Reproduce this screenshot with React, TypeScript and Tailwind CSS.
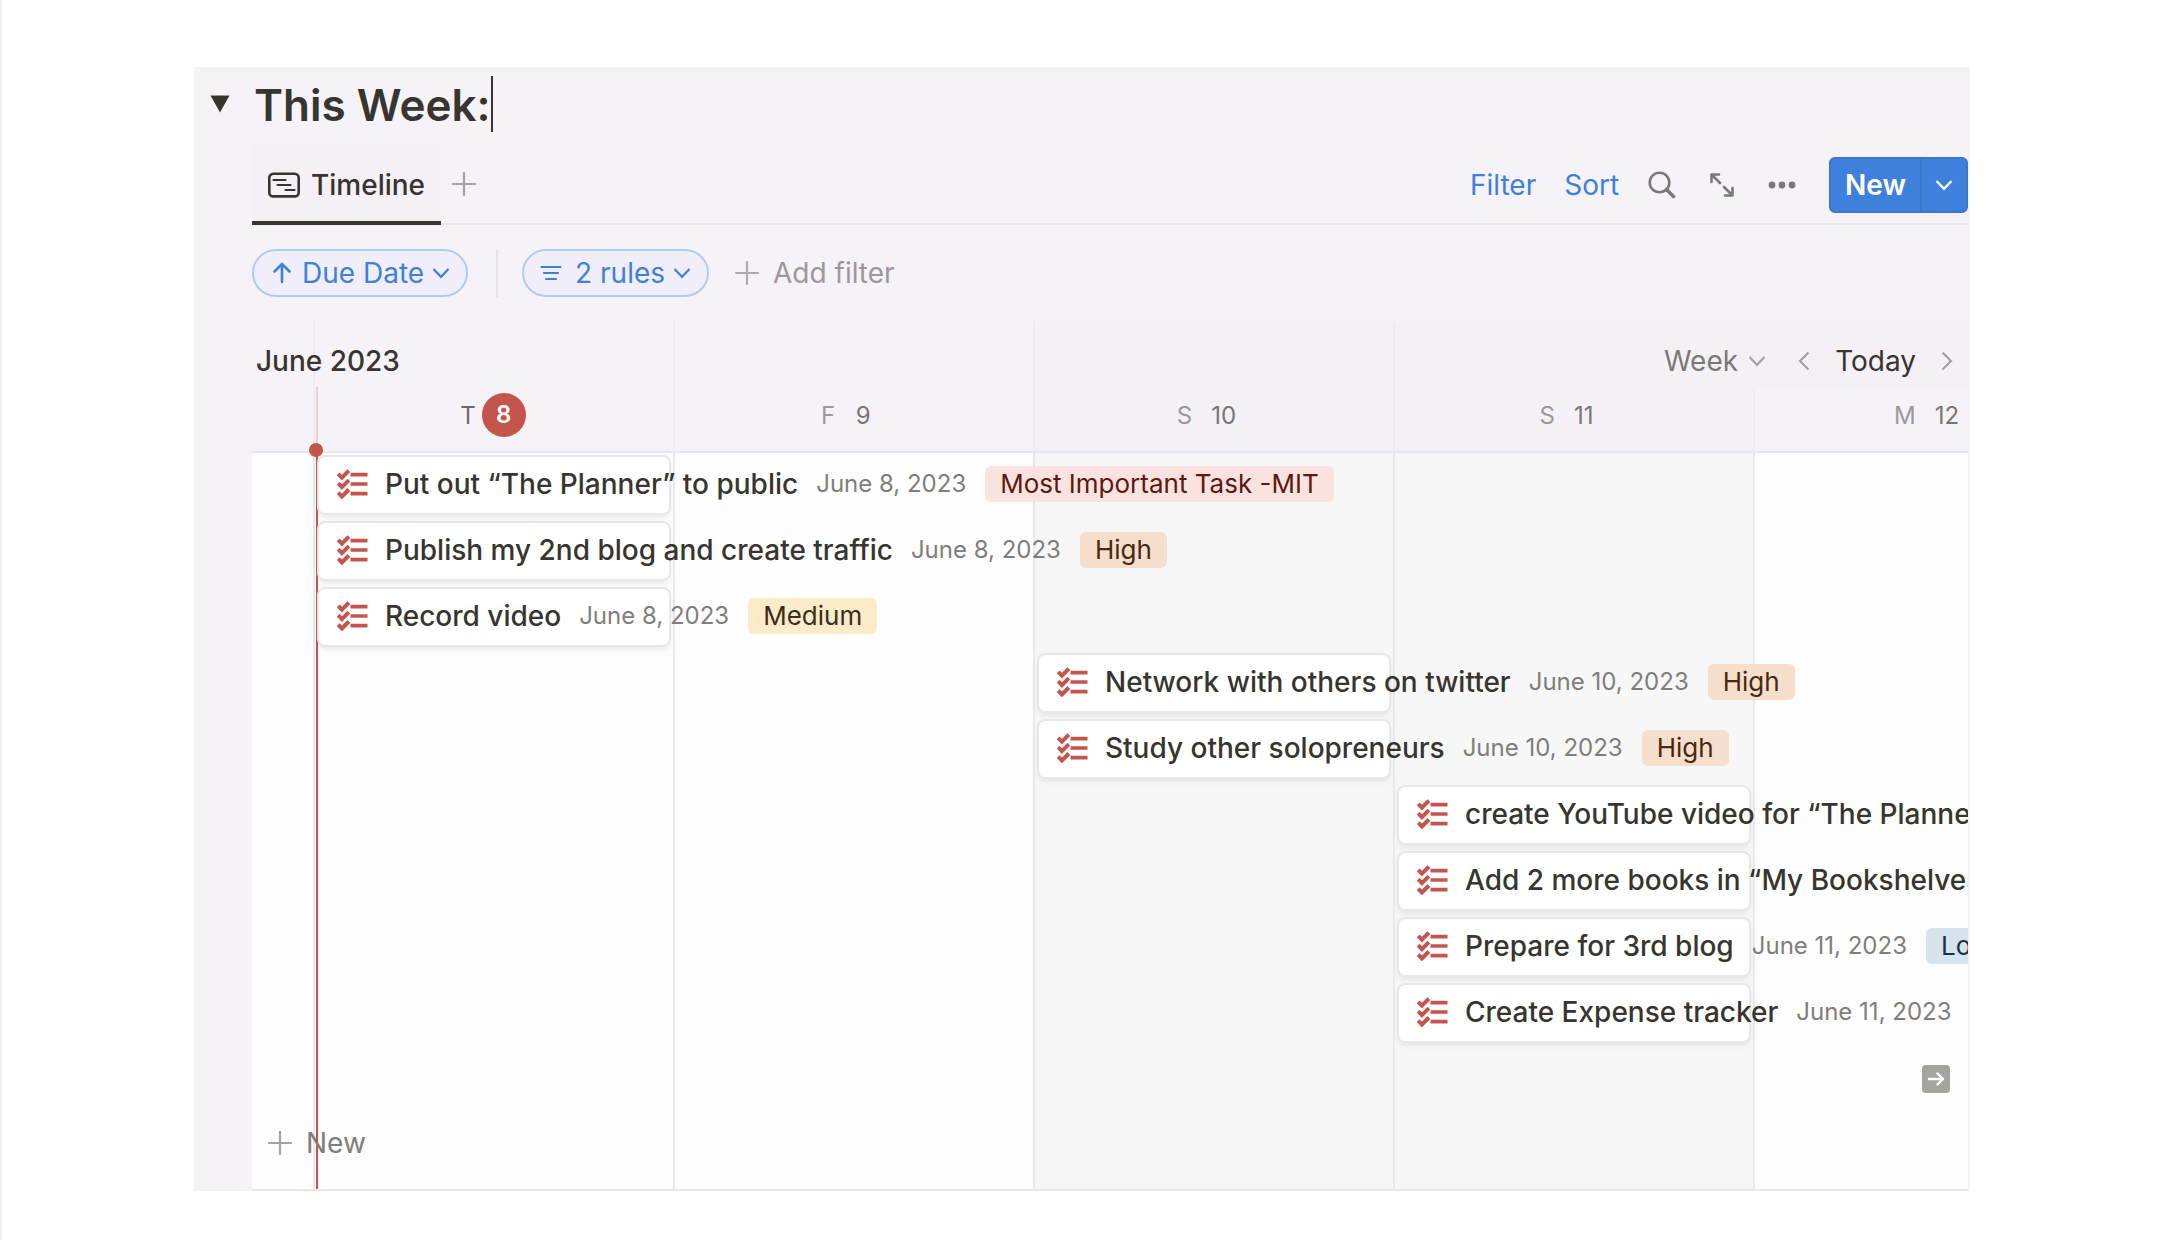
import { ReactNode } from "react";
import clsx from "clsx";

interface Day {
    letter: string;
    date: number;
    isToday?: boolean;
    isWeekend?: boolean;
}

interface Task {
    name: string;
    date: string;
    priority?: string;
    start: string;
}

const DAYS: Day[] = [
    { letter: "T", date: 8, isToday: true },
    { letter: "F", date: 9 },
    { letter: "S", date: 10, isWeekend: true },
    { letter: "S", date: 11, isWeekend: true },
    { letter: "M", date: 12 },
];

const TASKS: Task[] = [
    { name: "Put out “The Planner” to public", date: "June 8, 2023", priority: "Most Important Task -MIT", start: "col-start-2" },
    { name: "Publish my 2nd blog and create traffic", date: "June 8, 2023", priority: "High", start: "col-start-2" },
    { name: "Record video", date: "June 8, 2023", priority: "Medium", start: "col-start-2" },
    { name: "Network with others on twitter", date: "June 10, 2023", priority: "High", start: "col-start-4" },
    { name: "Study other solopreneurs", date: "June 10, 2023", priority: "High", start: "col-start-4" },
    { name: "create YouTube video for “The Planner”", date: "June 11, 2023", priority: "High", start: "col-start-5" },
    { name: "Add 2 more books in “My Bookshelves”", date: "June 11, 2023", priority: "Medium", start: "col-start-5" },
    { name: "Prepare for 3rd blog", date: "June 11, 2023", priority: "Low", start: "col-start-5" },
    { name: "Create Expense tracker", date: "June 11, 2023", start: "col-start-5" },
];

const TAG_COLORS: Record<string, string> = {
    "Most Important Task -MIT": "bg-[#fae3de] text-[#5d1715]",
    High: "bg-[#f6decc] text-[#49290e]",
    Medium: "bg-[#faebc9] text-[#402c1b]",
    Low: "bg-[#d6e4ee] text-[#183347]",
};

const GRID = "grid grid-cols-[61px_repeat(5,360px)]";

function ChevronDown({ className }: { className?: string }) {
    return (
        <svg viewBox="0 0 18 12" fill="none" stroke="currentColor" strokeWidth="2.2" className={clsx("h-3 w-[18px]", className)}>
            <path d="M1.5 2 9 9.8 16.5 2" />
        </svg>
    );
}

function Chevron({ flip }: { flip?: boolean }) {
    return (
        <svg viewBox="0 0 12 20" fill="none" stroke="currentColor" strokeWidth="2.2" className={clsx("h-5 w-3", flip && "rotate-180")}>
            <path d="M10.5 1.5 2 10l8.5 8.5" />
        </svg>
    );
}

function Plus() {
    return (
        <svg viewBox="0 0 24 24" stroke="currentColor" strokeWidth="2.2" strokeLinecap="round" className="size-6">
            <path d="M12 1v22M1 12h22" />
        </svg>
    );
}

function ChecklistIcon() {
    return (
        <svg viewBox="0 0 31 30" fill="none" stroke="#c4554d" className="h-[30px] w-[31px] shrink-0">
            <path strokeWidth="4" d="M1.2 4.8l3.7 3.9 7-7M1.2 14.2l3.7 3.9 7-7M1.2 23.6l3.7 3.9 7-7" />
            <path strokeWidth="3.6" d="M13.5 5.6h17M13.5 15h17M13.5 24.6h17" />
        </svg>
    );
}

function Pill({ children }: { children: ReactNode }) {
    return (
        <button className="flex h-12 items-center rounded-full border-2 border-[#b2caef] bg-[#f0eef8] px-3 text-[#3f80dc]">
            {children}
        </button>
    );
}

function Toolbar() {
    return (
        <div className="mt-[13px] flex h-20 items-center justify-between border-b-2 border-[#e9e7ea]">
            <div className="flex items-center">
                <button className="-mb-[2px] flex h-20 items-center gap-[11px] border-b-4 border-[#37352f] bg-[#f5f0f5] px-4 pt-1 font-medium">
                    <svg viewBox="0 0 32 26" fill="none" stroke="currentColor" strokeWidth="2.6" strokeLinecap="round" className="h-[26px] w-8">
                        <rect x="1.3" y="1.8" width="29.4" height="22.6" rx="4" />
                        <path strokeWidth="2.2" d="M5.5 8h12M9.5 13h13M17.5 18h9" />
                    </svg>
                    Timeline
                </button>
                <button aria-label="Add view" className="ml-[11px] text-[#a3a1a3]">
                    <Plus />
                </button>
            </div>
            <div className="flex items-center pt-[2px]">
                <button className="text-[#3f80dc]">Filter</button>
                <button className="ml-7 text-[#3f80dc]">Sort</button>
                <button aria-label="Search" className="ml-[29px] text-[#7b7977]">
                    <svg viewBox="0 0 28 28" fill="none" stroke="currentColor" className="size-7">
                        <circle cx="11.5" cy="11.5" r="9.8" strokeWidth="2.6" />
                        <path d="M18.5 18.5l7 7" strokeWidth="3.6" strokeLinecap="round" />
                    </svg>
                </button>
                <button aria-label="Expand" className="ml-[33px] text-[#7b7977]">
                    <svg viewBox="0 0 26 26" fill="none" stroke="currentColor" strokeWidth="2.6" strokeLinecap="round" strokeLinejoin="round" className="size-[26px]">
                        <path d="M2.5 10V2.5H10M3 3l8 8M23.5 16v7.5H16M23 23l-8-8" />
                    </svg>
                </button>
                <button aria-label="More" className="ml-[33px] text-[#7b7977]">
                    <svg viewBox="0 0 28 8" fill="currentColor" className="h-2 w-7">
                        <circle cx="4" cy="4" r="3.4" />
                        <circle cx="14" cy="4" r="3.4" />
                        <circle cx="24" cy="4" r="3.4" />
                    </svg>
                </button>
                <div className="ml-[33px] flex h-14 rounded-md border-2 border-[#3b76ca] bg-[#3f80dc] text-white">
                    <button className="border-r-2 border-[#3b76ca] px-[14px] font-semibold">New</button>
                    <button aria-label="New from template" className="flex w-11 items-center justify-center">
                        <ChevronDown />
                    </button>
                </div>
            </div>
        </div>
    );
}

function Filters() {
    return (
        <div className="mt-6 flex items-center">
            <Pill>
                <svg viewBox="0 0 20 22" fill="none" stroke="currentColor" strokeWidth="2.6" strokeLinecap="round" strokeLinejoin="round" className="ml-[6px] h-[22px] w-5">
                    <path d="M10 20V2.5M2.5 9.5 10 2l7.5 7.5" />
                </svg>
                <span className="mr-2 ml-[10px]">Due Date</span>
                <ChevronDown className="mr-1" />
            </Pill>
            <div className="mx-6 ml-7 h-12 w-[2px] bg-[#e6e4e9]" />
            <Pill>
                <svg viewBox="0 0 22 16" stroke="currentColor" strokeWidth="2.2" strokeLinecap="round" className="ml-1 h-4 w-[22px]">
                    <path d="M1.5 2h19M4 8h14M6 14h10" />
                </svg>
                <span className="mr-2 ml-[13px]">2 rules</span>
                <ChevronDown className="mr-1" />
            </Pill>
            <button className="ml-[26px] flex items-center gap-[14px] text-[#9a9899]">
                <span className="text-[#adabad]">
                    <Plus />
                </span>
                Add filter
            </button>
        </div>
    );
}

function DayHeader() {
    return (
        <div className="mt-6 grid grid-cols-1 overflow-hidden border-b-2 border-[#e8e6e8]">
            <div className={clsx(GRID, "col-start-1 row-start-1")}>
                <div />
                {DAYS.map((day) => (
                    <div
                        key={day.date}
                        className={clsx(
                            "flex items-start justify-center gap-[6px] border-l-2 border-[#efedf2] pt-[72px] pr-[2px] text-2xl",
                            day.isWeekend && "bg-[#f3f1f6]",
                        )}
                    >
                        <span className={clsx("leading-[46px]", day.isToday ? "text-[#6b6966]" : "text-[#9a9899]")}>{day.letter}</span>
                        <span
                            className={clsx(
                                "h-11 min-w-11 rounded-full text-center",
                                day.isToday ? "bg-[#c4554a] leading-[44px] font-semibold text-white" : "px-[13px] leading-[46px] text-[#787673]",
                            )}
                        >
                            {day.date}
                        </span>
                    </div>
                ))}
            </div>
            <div className="col-start-1 row-start-1 ml-16 mt-[66px] h-16 w-[2px] bg-[#eacbd0]" />
            <div className="z-10 col-start-1 row-start-1 flex h-[66px] justify-between">
                <span className="pt-[22px] pl-1 font-medium">June 2023</span>
                <div className="flex items-center bg-[#f4f0f5] pt-[14px] pl-4">
                    <button className="flex items-center gap-[10px] text-[#7b7977]">
                        Week
                        <ChevronDown className="text-[#a3a1a3]" />
                    </button>
                    <button aria-label="Previous week" className="ml-8 text-[#a3a1a3]">
                        <Chevron />
                    </button>
                    <button className="mx-[25px]">Today</button>
                    <button aria-label="Next week" className="mr-[15px] text-[#a3a1a3]">
                        <Chevron flip />
                    </button>
                </div>
            </div>
        </div>
    );
}

function TaskRow({ task }: { task: Task }) {
    return (
        <div className={clsx(GRID, "pt-1 pb-[6px]")}>
            <div
                className={clsx(
                    "ml-[6px] flex h-14 w-[350px] items-center rounded-md bg-white pb-[2px] pl-[18px] whitespace-nowrap shadow-[0_0_0_2px_#e7e7e7,0_4px_6px_#00000018]",
                    task.start,
                )}
            >
                <ChecklistIcon />
                <a href="#" className="ml-[17px] shrink-0 font-medium">{task.name}</a>
                <span className="ml-[18px] shrink-0 text-2xl text-[#7f7e7a]">{task.date}</span>
                {task.priority && (
                    <span className={clsx("ml-[19px] h-9 shrink-0 rounded-md px-[15px] text-[26px] leading-9", TAG_COLORS[task.priority])}>
                        {task.priority}
                    </span>
                )}
            </div>
        </div>
    );
}

function Board() {
    return (
        <div className="relative">
            <div className="grid grid-cols-1 overflow-hidden border-b-2 border-[#e8e8e7] bg-[#fdfdfd]">
                <div className={clsx(GRID, "col-start-1 row-start-1")}>
                    <div />
                    {DAYS.map((day) => (
                        <div key={day.date} className={clsx("border-l-2 border-[#e9e9e7]", day.isWeekend && "bg-[#f7f7f7]")} />
                    ))}
                </div>
                <div className="col-start-1 row-start-1 ml-16 w-[2px] bg-[#c4554a]" />
                <div className="z-10 col-start-1 row-start-1 pb-[14px]">
                    {TASKS.map((task) => (
                        <TaskRow key={task.name} task={task} />
                    ))}
                    <div className="flex h-16 items-center justify-end pr-[18px]">
                        <button aria-label="Scroll to next task" className="flex size-7 items-center justify-center rounded bg-[#a5a49f] text-white">
                            <svg viewBox="0 0 18 16" fill="none" stroke="currentColor" strokeWidth="2.4" strokeLinecap="round" strokeLinejoin="round" className="h-4 w-[18px]">
                                <path d="M2 8h14M10.5 2.5 16 8l-5.5 5.5" />
                            </svg>
                        </button>
                    </div>
                    <button className="flex h-16 items-center gap-[14px] pl-4 text-[#7f7e7a]">
                        <span className="text-[#a5a4a1]">
                            <Plus />
                        </span>
                        New
                    </button>
                </div>
            </div>
            {/* current time marker */}
            <div className="absolute -top-[10px] left-[57px] z-20 size-[14px] rounded-full bg-[#c4554a]" />
        </div>
    );
}

export default function App() {
    return (
        <div className="min-h-screen border-l-2 border-[#f1f1f1] bg-white pt-[67px] pr-48 pb-12 pl-48 font-['Inter',sans-serif] text-[28px] leading-9 text-[#37352f]">
            <main className="bg-[#f5f3f8] pt-[9px] pr-[2px]">
                <div className="flex h-14 items-center">
                    <button aria-label="Toggle section" className="ml-4 w-11">
                        <svg viewBox="0 0 20 18" fill="currentColor" className="h-[18px] w-5">
                            <path d="M0.5 0.5h19L10 17.5z" />
                        </svg>
                    </button>
                    <h1 className="pt-[2px] text-[44px] leading-[56px] font-semibold">This Week:</h1>
                    <div className="h-14 w-[2px] bg-[#37352f]" />
                </div>
                <div className="ml-[58px]">
                    <Toolbar />
                    <Filters />
                    <DayHeader />
                    <Board />
                </div>
            </main>
        </div>
    );
}
